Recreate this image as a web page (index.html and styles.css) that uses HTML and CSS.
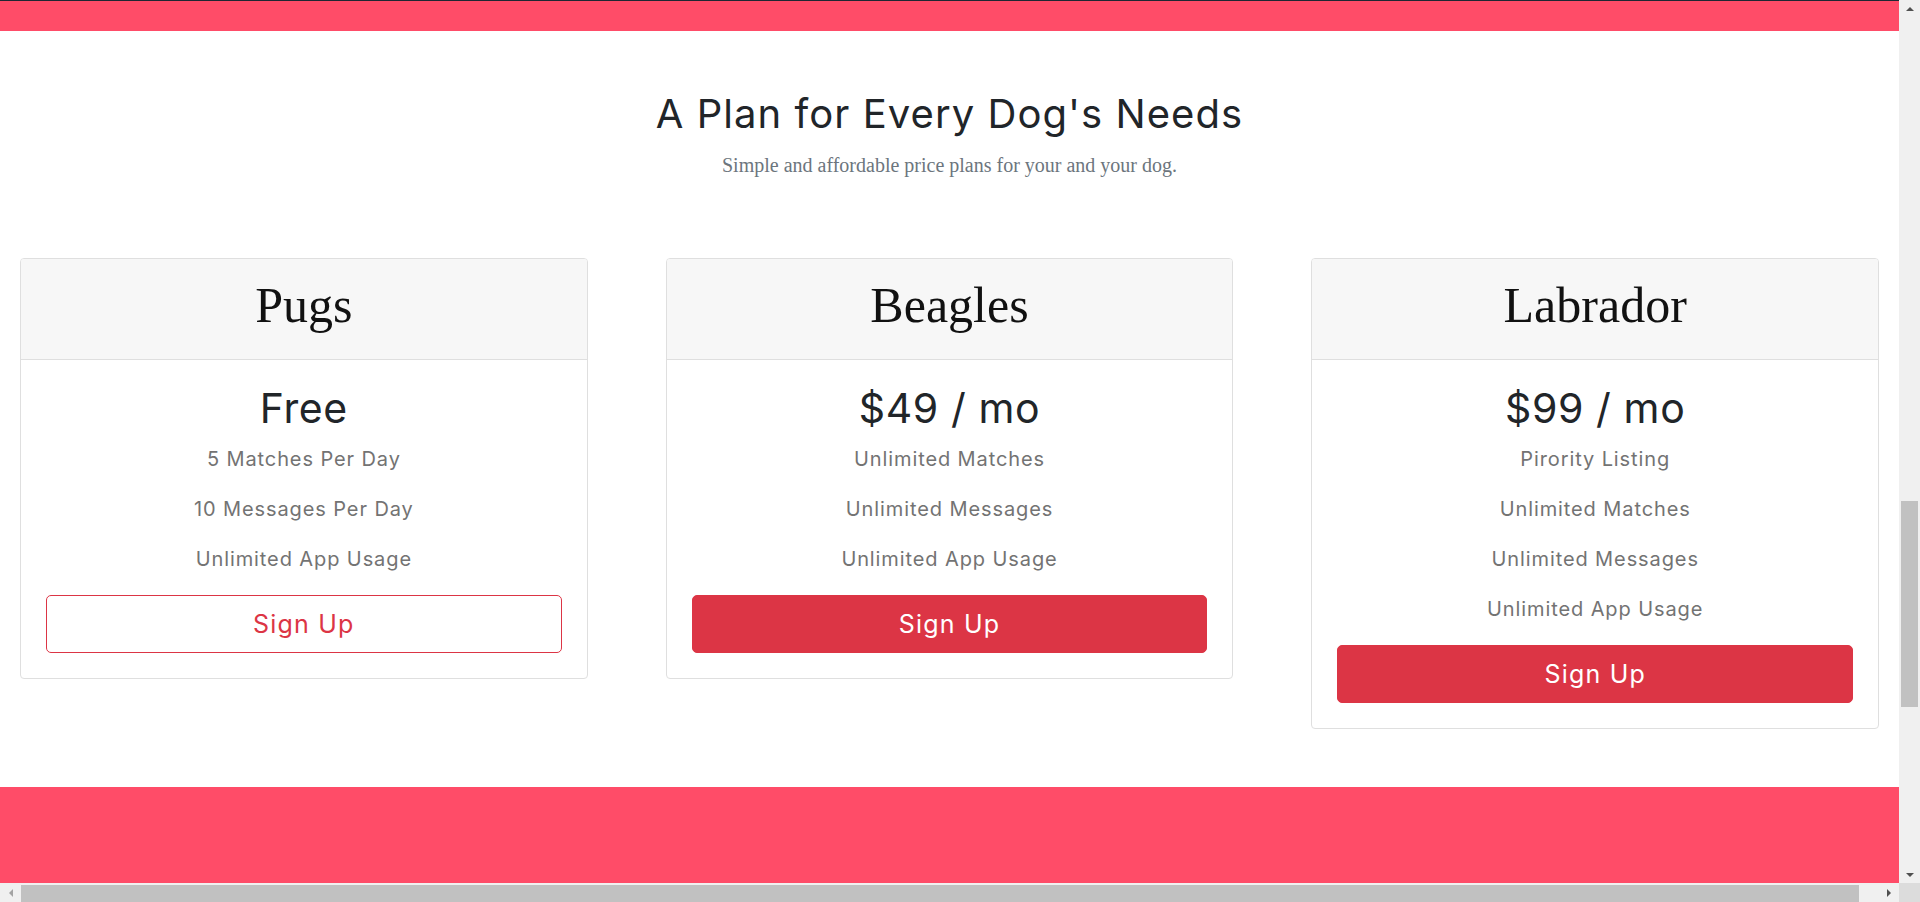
FILE: index.html
```html
<!DOCTYPE html>
<html lang="en">
<head>
<meta charset="utf-8">
<title>TinDog Pricing</title>
<link rel="stylesheet" href="styles.css">
</head>
<body>
<div class="screen">
  <main class="viewport">
    <div class="top-edge"></div>
    <section class="band band-top"></section>
    <section class="pricing">
      <h2 class="pricing-title">A Plan for Every Dog's Needs</h2>
      <p class="pricing-sub">Simple and affordable price plans for your and your dog.</p>
      <div class="plans">
        <div class="card">
          <div class="card-header"><h3>Pugs</h3></div>
          <div class="card-body">
            <h2 class="price">Free</h2>
            <p class="feature">5 Matches Per Day</p>
            <p class="feature">10 Messages Per Day</p>
            <p class="feature">Unlimited App Usage</p>
            <button class="btn btn-outline" type="button">Sign Up</button>
          </div>
        </div>
        <div class="card">
          <div class="card-header"><h3>Beagles</h3></div>
          <div class="card-body">
            <h2 class="price">$49 / mo</h2>
            <p class="feature">Unlimited Matches</p>
            <p class="feature">Unlimited Messages</p>
            <p class="feature">Unlimited App Usage</p>
            <button class="btn btn-solid" type="button">Sign Up</button>
          </div>
        </div>
        <div class="card">
          <div class="card-header"><h3>Labrador</h3></div>
          <div class="card-body">
            <h2 class="price">$99 / mo</h2>
            <p class="feature">Pirority Listing</p>
            <p class="feature">Unlimited Matches</p>
            <p class="feature">Unlimited Messages</p>
            <p class="feature">Unlimited App Usage</p>
            <button class="btn btn-solid" type="button">Sign Up</button>
          </div>
        </div>
      </div>
    </section>
    <section class="band band-bottom"></section>
  </main>
  <div class="vscroll">
    <div class="arrow-box"><span class="tri tri-up"></span></div>
    <div class="vtrack"><div class="vthumb" style="margin-top:484px;height:206px"></div></div>
    <div class="arrow-box"><span class="tri tri-down"></span></div>
  </div>
  <div class="hscroll">
    <div class="arrow-box-h"><span class="tri tri-left"></span></div>
    <div class="htrack"><div class="hthumb" style="width:1838px"></div></div>
    <div class="arrow-box-h"><span class="tri tri-right"></span></div>
  </div>
  <div class="corner"></div>
</div>
</body>
</html>
```
FILE: styles.css
```css
* { box-sizing: border-box; }
html, body { margin: 0; height: 100%; }
body {
  font-family: "Inter", "Noto Sans", sans-serif;
  overflow: hidden;
  background: #fff;
}
.screen {
  display: grid;
  grid-template-columns: 1fr 21px;
  grid-template-rows: 1fr 19px;
  height: 100vh;
}
.viewport { overflow: hidden; background: #fff; }
.top-edge { height: 1px; background: #1f2733; }
.band { background: #ff4c68; }
.band-top { height: 30px; }
.band-bottom { height: 200px; }

.pricing { padding: 59px 0 58px; text-align: center; }
.pricing-title {
  margin: 0;
  font-size: 40px;
  line-height: 48px;
  font-weight: 400;
  color: #212529;
  letter-spacing: 1.05px;
}
.pricing-sub {
  margin: 15px 0 81px;
  font-family: "Liberation Serif", serif;
  font-size: 20px;
  line-height: 24px;
  color: #6c757d;
}
.plans {
  display: flex;
  align-items: flex-start;
  gap: 78px;
  padding: 0 20px;
}
.card {
  flex: 1;
  border: 1px solid #dfdfdf;
  border-radius: 4px;
  background: #fff;
  overflow: hidden;
}
.card-header {
  height: 101px;
  display: flex;
  align-items: center;
  justify-content: center;
  padding-bottom: 9px;
  background: #f7f7f7;
  border-bottom: 1px solid #dfdfdf;
}
.card-header h3 {
  margin: 0;
  font-family: "Liberation Serif", serif;
  font-weight: 400;
  font-size: 50px;
  line-height: 58px;
  color: #111;
}
.card-body { padding: 24px 25px 25px; }
.price {
  margin: 0 0 14px;
  font-size: 41px;
  line-height: 48px;
  font-weight: 400;
  color: #212529;
  letter-spacing: 0.6px;
}
.feature {
  margin: 0 0 24px;
  font-size: 20px;
  line-height: 26px;
  color: #737373;
  letter-spacing: 0.9px;
}
.feature:last-of-type { margin-bottom: 23px; }
.btn {
  display: block;
  width: 100%;
  height: 58px;
  border-radius: 5px;
  font-family: "Inter", "Noto Sans", sans-serif;
  font-size: 25px;
  font-weight: 400;
  letter-spacing: 1.2px;
  cursor: pointer;
}
.btn-outline { background: #fff; border: 1px solid #dc3545; color: #dc3545; }
.btn-solid { background: #dc3545; border: 1px solid #dc3545; color: #fff; }

/* browser scrollbars */
.vscroll {
  display: flex;
  flex-direction: column;
  background: #f0f0f0;
}
.arrow-box {
  height: 17px;
  display: flex;
  align-items: center;
  justify-content: center;
}
.vtrack { flex: 1; padding: 0 2px; }
.vthumb { background: #c1c1c1; }
.hscroll {
  display: flex;
  background: #f0f0f0;
}
.arrow-box-h {
  width: 21px;
  display: flex;
  align-items: center;
  justify-content: center;
}
.htrack { flex: 1; padding-top: 2px; }
.hthumb { height: 100%; background: #c1c1c1; }
.corner { background: #dcdcdc; }
.tri { width: 0; height: 0; display: block; }
.tri-up { border-left: 4px solid transparent; border-right: 4px solid transparent; border-bottom: 4px solid #505050; }
.tri-down { border-left: 4px solid transparent; border-right: 4px solid transparent; border-top: 4px solid #505050; }
.tri-left { border-top: 4px solid transparent; border-bottom: 4px solid transparent; border-right: 4px solid #a3a3a3; }
.tri-right { border-top: 4px solid transparent; border-bottom: 4px solid transparent; border-left: 4px solid #505050; }
```
